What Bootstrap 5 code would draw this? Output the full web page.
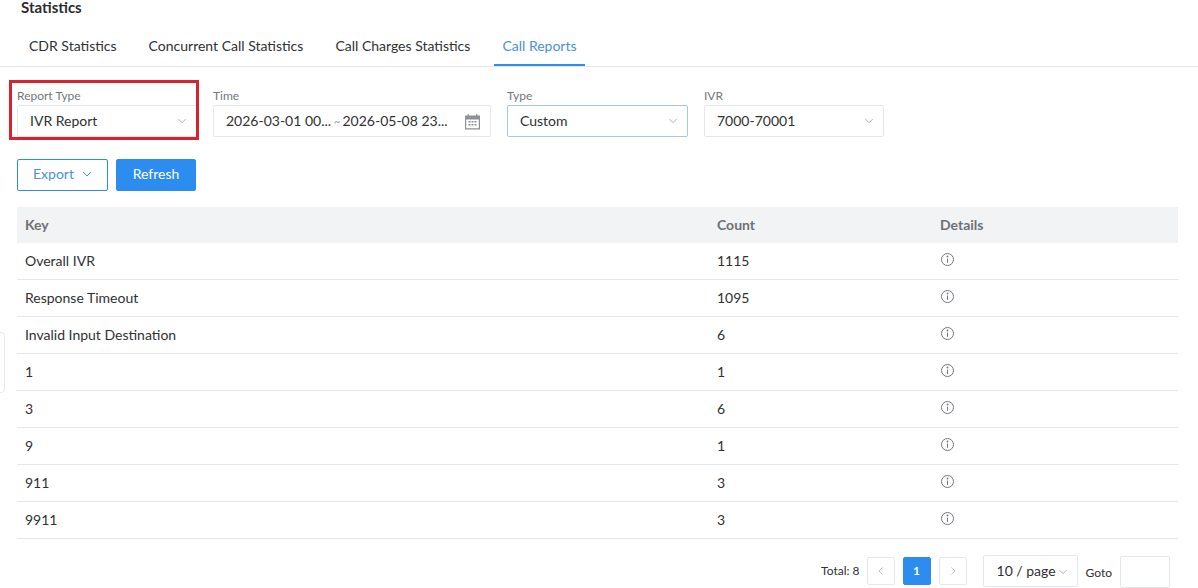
<!DOCTYPE html>
<html lang="en">
<head>
    <meta charset="UTF-8">
    <meta name="viewport" content="width=device-width, initial-scale=1.0">
    <title>Statistics</title>
    <link href="https://cdn.jsdelivr.net/npm/bootstrap@5.3.0/dist/css/bootstrap.min.css" rel="stylesheet">
    <style>
        html, body { height: 588px; overflow: hidden; }
        body { font-family: Lato, "Liberation Sans", sans-serif; font-size: 14px; color: #2f3033; background: #fff; }
        .page-title { font-size: 15px; font-weight: 700; line-height: 20px; margin: -3px 0 0 21px; height: 32px; color: #2b2c30; }
        .tab-bar { height: 38px; padding-left: 21px; gap: 16px; border-bottom: 1px solid #e4e7ed; }
        .tab-item { padding: 0 8px; height: 37px; line-height: 33px; color: #303133; white-space: nowrap; }
        .tab-item.current { color: #4a90e2; border-bottom: 2px solid #2d8cf0; }
        .filter-row { padding: 21px 0 0 17px; gap: 16px; }
        .filter-item { width: 180px; }
        .filter-time { width: 278px; }
        .filter-type { width: 181px; }
        .filter-label { font-size: 12px; line-height: 16px; height: 17px; color: #73767c; }
        .select-box { height: 32px; padding: 0 10px 2px 12px; border: 1px solid #e4e7ed; border-radius: 2px; color: #303133; }
        .select-box.picked { border-color: #a5c8e4; }
        .time-sep { font-size: 11px; color: #9a9da4; margin: 0 2px 0 3px; }
        .marked-wrap { position: relative; }
        .marked-wrap::after { content: ""; position: absolute; left: -8px; right: -2px; top: -8px; bottom: -3px; border: 3px solid #d8232f; pointer-events: none; }
        .chev { width: 8px; height: 8px; margin-top: 2px; stroke: #a8abb2; fill: none; stroke-width: 1; }
        .cal-icon { margin: 3px -1px 0 0; }
        .action-row { padding: 22px 0 0 17px; gap: 8px; }
        .btn-export { width: 91px; height: 32px; padding: 0 0 3px; font-size: 14px; color: #4a90e2; border: 1px solid #2d8cf0; border-radius: 2px; background: #fff; }
        .btn-refresh { width: 80px; height: 32px; padding: 0 0 3px; font-size: 14px; color: #fff; background: #2d8cf0; border: 1px solid #2d8cf0; border-radius: 2px; }
        .data-wrap { margin: 16px 20px 0 17px; }
        .data-table { width: 100%; table-layout: fixed; border-collapse: collapse; margin: 0; }
        .data-table th { height: 36px; padding: 0 8px 2px; font-weight: 700; color: #6e7076; background: #f2f3f5; border: 0; vertical-align: middle; }
        .data-table td { height: 37px; padding: 0 8px; color: #303133; border-bottom: 1px solid #e4e7ed; }
        .data-table tbody tr:first-child td { height: 36px; }
        .col-key { width: 692px; }
        .col-count { width: 223px; }
        .info-icon { width: 15px; height: 15px; display: block; margin-top: -3px; }
        .pager { padding: 16px 28px 0 0; justify-content: flex-end; align-items: flex-start; }
        .pager-total { font-size: 12px; line-height: 32px; margin-right: 7px; }
        .page-cell { width: 28px; height: 28px; border: 1px solid #e4e7ed; border-radius: 2px; margin: 2px 8px 0 0; font-size: 12px; }
        .page-cell.current { background: #2d8cf0; border-color: #2d8cf0; color: #fff; font-weight: 700; }
        .page-size { width: 95px; height: 32px; margin-left: 8px; border: 1px solid #e4e7ed; border-radius: 2px; padding: 0 10px 0 13px; }
        .goto-label { font-size: 12px; line-height: 36px; margin: 0 8px; }
        .goto-box { width: 50px; height: 32px; margin-top: 1px; border: 1px solid #e4e7ed; border-radius: 2px; }
        .side-handle { position: absolute; left: -1px; top: 332px; width: 6px; height: 61px; border: 1px solid #e9ebef; border-radius: 0 4px 4px 0; }
    </style>
</head>
<body>
    <div class="side-handle"></div>
    <div class="page-title">Statistics</div>

    <div class="tab-bar d-flex">
        <div class="tab-item">CDR Statistics</div>
        <div class="tab-item">Concurrent Call Statistics</div>
        <div class="tab-item">Call Charges Statistics</div>
        <div class="tab-item current">Call Reports</div>
    </div>

    <div class="filter-row d-flex">
        <div class="filter-item marked-wrap">
            <div class="filter-label">Report Type</div>
            <div class="select-box d-flex align-items-center justify-content-between">
                <span>IVR Report</span>
                <svg class="chev" viewBox="0 0 8 8"><path d="M.5 2.2L4 5.7l3.5-3.5"/></svg>
            </div>
        </div>
        <div class="filter-item filter-time">
            <div class="filter-label">Time</div>
            <div class="select-box d-flex align-items-center justify-content-between">
                <span>2026-03-01 00...<span class="time-sep">~</span>2026-05-08 23...</span>
                <svg class="cal-icon" width="17" height="17" viewBox="0 0 17 17"><path fill="#8d9097" fill-rule="evenodd" d="M1 2.5h2.6V1h1.2v1.5h7.4V1h1.2v1.5H16V16.5H1zM2.2 6.5v8.8h12.6V6.5z"/><path fill="#8d9097" d="M4.5 8h2v1.6h-2zm3 0h2v1.6h-2zm3 0h2v1.6h-2zm-6 3h2v1.6h-2zm3 0h2v1.6h-2zm3 0h2v1.6h-2z"/></svg>
            </div>
        </div>
        <div class="filter-item filter-type">
            <div class="filter-label">Type</div>
            <div class="select-box picked d-flex align-items-center justify-content-between">
                <span>Custom</span>
                <svg class="chev" viewBox="0 0 8 8"><path d="M.5 2.2L4 5.7l3.5-3.5"/></svg>
            </div>
        </div>
        <div class="filter-item">
            <div class="filter-label">IVR</div>
            <div class="select-box d-flex align-items-center justify-content-between">
                <span>7000-70001</span>
                <svg class="chev" viewBox="0 0 8 8"><path d="M.5 2.2L4 5.7l3.5-3.5"/></svg>
            </div>
        </div>
    </div>

    <div class="action-row d-flex">
        <button class="btn btn-export d-flex align-items-center justify-content-center gap-2">Export
            <svg width="10" height="10" viewBox="0 0 10 10" fill="none" stroke="#4a90e2"><path d="M1 3l4 4 4-4"/></svg>
        </button>
        <button class="btn btn-refresh">Refresh</button>
    </div>

    <div class="data-wrap">
        <table class="table data-table align-middle">
            <thead>
                <tr><th class="col-key">Key</th><th class="col-count">Count</th><th>Details</th></tr>
            </thead>
            <tbody id="reportRows"></tbody>
        </table>
    </div>

    <div class="pager d-flex">
        <span class="pager-total">Total: 8</span>
        <div class="page-cell d-flex align-items-center justify-content-center">
            <svg width="10" height="10" viewBox="0 0 10 10" fill="none" stroke="#c0c4cc"><path d="M6.5 1.5L3 5l3.5 3.5"/></svg>
        </div>
        <div class="page-cell current d-flex align-items-center justify-content-center">1</div>
        <div class="page-cell d-flex align-items-center justify-content-center">
            <svg width="10" height="10" viewBox="0 0 10 10" fill="none" stroke="#c0c4cc"><path d="M3.5 1.5L7 5 3.5 8.5"/></svg>
        </div>
        <div class="page-size d-flex align-items-center justify-content-between">
            <span>10 / page</span>
            <svg class="chev" viewBox="0 0 8 8"><path d="M.5 2.2L4 5.7l3.5-3.5"/></svg>
        </div>
        <span class="goto-label">Goto</span>
        <div class="goto-box"></div>
    </div>

    <script>
        const rows = [
            ["Overall IVR", 1115], ["Response Timeout", 1095], ["Invalid Input Destination", 6], ["1", 1],
            ["3", 6], ["9", 1], ["911", 3], ["9911", 3]
        ];
        const infoIcon = `<svg class="info-icon" viewBox="0 0 15 15" fill="none" stroke="#74777e"><circle cx="7.5" cy="7.5" r="6"/><path d="M7.5 6.6v4.2"/><circle cx="7.5" cy="4.5" r=".9" fill="#74777e" stroke="none"/></svg>`;
        document.getElementById("reportRows").innerHTML = rows.map(r =>
            `<tr><td>${r[0]}</td><td>${r[1]}</td><td>${infoIcon}</td></tr>`
        ).join("");
    </script>
    <script src="https://cdn.jsdelivr.net/npm/bootstrap@5.3.0/dist/js/bootstrap.bundle.min.js"></script>
</body>
</html>
